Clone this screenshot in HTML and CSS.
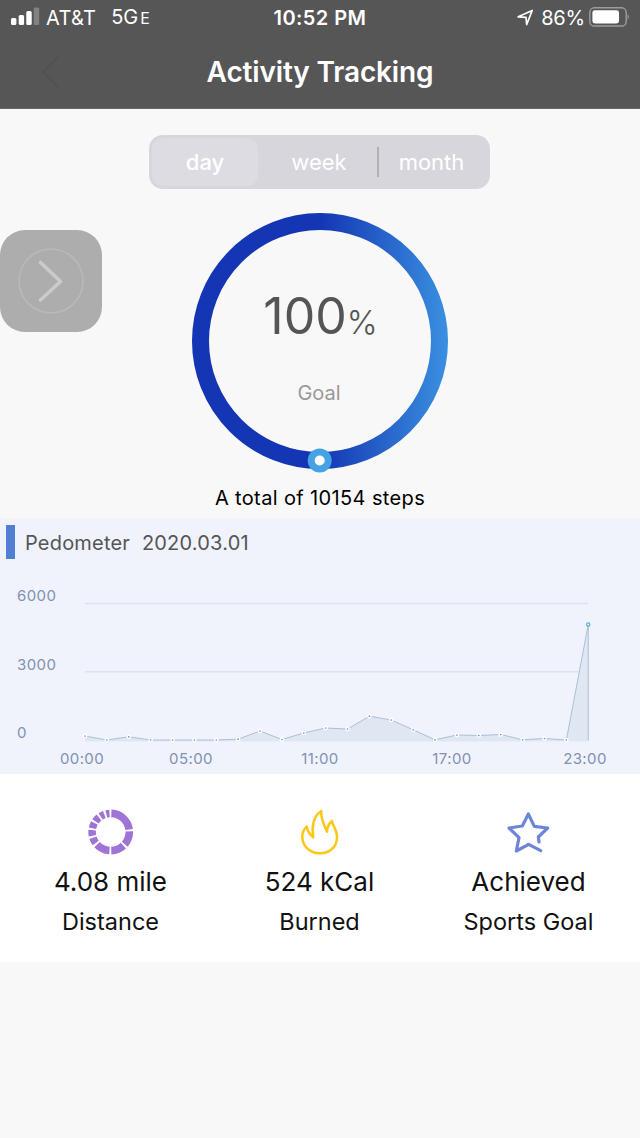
FILE: index.html
```html
<!DOCTYPE html>
<html lang="en">
<head>
    <meta charset="UTF-8">
    <meta name="viewport" content="width=device-width, initial-scale=1.0">
    <title>Activity Tracking</title>
    <link rel="stylesheet" href="styles.css">
</head>
<body>

    <header class="header">
        <div class="status-bar">
            <div class="status-left">
                <svg class="signal" width="29" height="19" viewBox="0 0 29 19">
                    <rect x="0" y="11" width="5.4" height="7" rx="1.5" fill="#fff"/>
                    <rect x="7.7" y="8" width="5.4" height="10" rx="1.5" fill="#fff"/>
                    <rect x="15.3" y="4" width="5.4" height="14" rx="1.5" fill="#fff"/>
                    <rect x="22.8" y="0.5" width="5.4" height="17.5" rx="1.5" fill="#828282"/>
                </svg>
                <span class="carrier">AT&amp;T</span>
                <span class="network">5G<small>E</small></span>
            </div>
            <div class="clock">10:52 PM</div>
            <div class="status-right">
                <svg width="17" height="17" viewBox="0 0 17 17">
                    <path d="M1.2 7.8 L15.2 1.5 L9.7 15.5 L9 8.3 Z" fill="none" stroke="#fff" stroke-width="1.7" stroke-linejoin="round"/>
                </svg>
                <span class="percent">86%</span>
                <svg class="battery" width="42" height="20" viewBox="0 0 42 20">
                    <rect x="0.8" y="0.8" width="36.4" height="18.2" rx="4.6" fill="none" stroke="#9c9c9c" stroke-width="1.4"/>
                    <rect x="3.4" y="3.3" width="26.6" height="13.2" rx="2.4" fill="#fff"/>
                    <path d="M38.6 7 Q41.2 9.9 38.6 12.8 Z" fill="#9c9c9c"/>
                </svg>
            </div>
        </div>
        <div class="title-bar">
            <svg class="back" width="26" height="40" viewBox="0 0 26 40">
                <path d="M21 5 L6 20 L21 35" fill="none" stroke="#525252" stroke-width="2"/>
            </svg>
            <h1>Activity Tracking</h1>
        </div>
    </header>

    <section class="summary">
        <div class="tabs">
            <button class="tab active">day</button>
            <button class="tab">week</button>
            <button class="tab divided">month</button>
        </div>

        <div class="ring">
            <svg width="256" height="262" viewBox="0 0 256 262">
                <defs>
                    <linearGradient id="ring-color" gradientUnits="userSpaceOnUse" x1="128" y1="0" x2="256" y2="0">
                        <stop offset="0" stop-color="#1436b4"/>
                        <stop offset="1" stop-color="#3a90e0"/>
                    </linearGradient>
                </defs>
                <circle cx="128" cy="128" r="119.5" fill="none" stroke="url(#ring-color)" stroke-width="17"/>
                <circle cx="127.7" cy="247.5" r="12" fill="#45a2e5"/>
                <circle cx="127.7" cy="247.5" r="5" fill="#fff"/>
            </svg>
            <div class="ring-text">
                <div class="ring-value">100<span>%</span></div>
                <div class="ring-label">Goal</div>
            </div>
        </div>

        <p class="total">A total of 10154 steps</p>

        <button class="float-btn">
            <svg width="66" height="66" viewBox="0 0 66 66">
                <circle cx="33" cy="33" r="32" fill="none" stroke="#b9b9b9" stroke-width="1.6"/>
                <path d="M22.5 14.5 L42.5 33.5 L22.5 52" fill="none" stroke="#cbcbcb" stroke-width="3.6" stroke-linecap="round" stroke-linejoin="round"/>
            </svg>
        </button>
    </section>

    <section class="chart">
        <h2>Pedometer <span>2020.03.01</span></h2>
        <svg id="steps-chart" width="640" height="210" viewBox="0 0 640 210">
            <line class="grid-line" x1="85" y1="39.5" x2="588" y2="39.5"/>
            <line class="grid-line" x1="85" y1="107.7" x2="588" y2="107.7"/>
            <text x="17" y="37.3">6000</text>
            <text x="17" y="105.6">3000</text>
            <text x="17" y="174">0</text>
            <text class="hour" x="82" y="200.3">00:00</text>
            <text class="hour" x="191" y="200.3">05:00</text>
            <text class="hour" x="320" y="200.3">11:00</text>
            <text class="hour" x="452" y="200.3">17:00</text>
            <text class="hour" x="585" y="200.3">23:00</text>
        </svg>
    </section>

    <section class="stats">
        <div class="stat">
            <svg width="46" height="46" viewBox="0 0 46 46">
                <circle cx="22.7" cy="23" r="18.6" fill="none" stroke="#a073d6" stroke-width="7.6" pathLength="360" transform="rotate(-88 22.7 23)"
                    stroke-dasharray="80 6 43 6 41 6 43 7 18 6 18 6 17 6 16 6 13 6 10 6"/>
            </svg>
            <div class="stat-value">4.08 mile</div>
            <div class="stat-label">Distance</div>
        </div>
        <div class="stat">
            <svg width="46" height="46" viewBox="171 42 138 138">
                <path d="M240 175 C207 175 186 151 187 123 C187 111 192 103 200 95 C203 108 209 119 220 127 C214 98 220 62 244 48 C241 72 252 88 261 110 C261 97 268 85 276 78 C277 92 291 104 291 124 C292 153 272 175 240 175 Z" fill="none" stroke="#fcc716" stroke-width="7.5" stroke-linejoin="round"/>
            </svg>
            <div class="stat-value">524 kCal</div>
            <div class="stat-label">Burned</div>
        </div>
        <div class="stat">
            <svg width="46" height="46" viewBox="167 42 138 138">
                <path d="M266 141 L264 126 L292 99 L252 94 L234 57 L216 93 L176 99 L206 128 L198 168 L235 148 L271 167" fill="none" stroke="#6c85d9" stroke-width="9.5" stroke-linejoin="round" stroke-linecap="round"/>
            </svg>
            <div class="stat-value">Achieved</div>
            <div class="stat-label">Sports Goal</div>
        </div>
    </section>

    <script src="script.js"></script>
</body>
</html>
```
FILE: styles.css
```css
* {
    box-sizing: border-box;
}

body {
    margin: 0;
    background: #f8f8f8;
    font-family: Inter, Roboto, sans-serif;
    color: #111;
}

h1, h2, p {
    margin: 0;
    font-weight: 400;
}

button {
    border: none;
    padding: 0;
    font-family: inherit;
}

svg {
    display: block;
}

/* Header */
.header {
    height: 109px;
    background: #565656;
    border-bottom: 1px solid #6a6565;
    color: #fff;
}

.status-bar {
    display: grid;
    grid-template-columns: 1fr auto 1fr;
    align-items: center;
    height: 34px;
    padding: 0 10px 0 11px;
    font-size: 20px;
    line-height: 34px;
}

.status-left, .status-right {
    display: flex;
    align-items: center;
}

.status-right {
    justify-content: flex-end;
}

.signal {
    margin-bottom: 3px;
}

.carrier {
    margin-left: 6px;
    letter-spacing: 0.3px;
}

.network {
    margin-left: 15px;
}

.network small {
    font-size: 16px;
    margin-left: 2px;
}

.clock {
    font-weight: 600;
    letter-spacing: 0.45px;
    margin-right: 1px;
}

.percent {
    margin: 0 4px 0 7px;
    letter-spacing: -0.2px;
}

.battery {
    margin-right: -1px;
    margin-bottom: 2px;
}

.title-bar {
    display: grid;
    grid-template-columns: 40px 1fr 40px;
    align-items: center;
    height: 75px;
    padding: 0 37px;
}

.title-bar h1 {
    font-size: 28px;
    font-weight: 600;
    letter-spacing: -0.15px;
    text-align: center;
    white-space: nowrap;
}

/* Summary */
.summary {
    position: relative;
    display: flex;
    flex-direction: column;
    align-items: center;
    height: 409px;
    padding-top: 26px;
}

.tabs {
    display: grid;
    grid-template-columns: 106px 1fr 112px;
    width: 341px;
    height: 54px;
    margin-right: 1px;
    padding: 3px;
    border-radius: 14px;
    background: #d7d6dc;
}

.tab {
    position: relative;
    padding-left: 5px;
    border-radius: 11px;
    background: none;
    color: #fff;
    font-size: 22px;
}

.tab.active {
    padding-left: 0;
    background: #dddce3;
    font-weight: 500;
}

.tab.divided {
    padding-left: 1px;
}

.tab.divided::before {
    content: "";
    position: absolute;
    left: 2px;
    top: 9px;
    width: 1.5px;
    height: 30px;
    background: #b2b1b6;
}

.ring {
    position: relative;
    margin-top: 24px;
}

.ring-text {
    position: absolute;
    top: 73px;
    left: 0;
    width: 100%;
    text-align: center;
}

.ring-value {
    color: #555;
    font-size: 50px;
    line-height: 60px;
}

.ring-value span {
    font-size: 33px;
    font-weight: 300;
    letter-spacing: -1px;
}

.ring-label {
    margin-top: 29px;
    padding-right: 2px;
    color: #999;
    font-size: 20px;
    line-height: 24px;
}

.total {
    margin-top: 11px;
    color: #000;
    font-size: 20px;
    letter-spacing: 0.37px;
    line-height: 24px;
}

.float-btn {
    position: absolute;
    top: 121px;
    left: 0;
    display: flex;
    align-items: center;
    justify-content: center;
    width: 102px;
    height: 102px;
    border-radius: 25px;
    background: #adadad;
}

/* Chart */
.chart {
    height: 256px;
    padding-top: 7px;
    background: #f0f3fb;
}

.chart h2 {
    height: 34px;
    margin-left: 6px;
    padding-left: 10px;
    border-left: 9px solid #5080d6;
    color: #555;
    font-size: 20px;
    letter-spacing: 0.2px;
    line-height: 36px;
}

.chart h2 span {
    margin-left: 6px;
}

.chart svg {
    margin-top: 5px;
}

.chart text {
    fill: #7f91b5;
    font-size: 15px;
    letter-spacing: 0.4px;
}

.chart .hour {
    text-anchor: middle;
}

.grid-line {
    stroke: #dde3ee;
    stroke-width: 1.5;
}

.area {
    fill: #dfe7f3;
}

.steps-line {
    fill: none;
    stroke: #acc0d6;
    stroke-width: 1;
}

.dot {
    fill: #7593b5;
    stroke: #fff;
    stroke-width: 1.5;
}

.dot.last {
    fill: #fff;
    stroke: #58a9d6;
    stroke-width: 1.2;
}

/* Stats */
.stats {
    display: grid;
    grid-template-columns: repeat(3, 209px);
    height: 188px;
    padding: 35px 0 0 6px;
    background: #fff;
    text-align: center;
}

.stat svg {
    margin: 0 auto;
}

.stat-value {
    margin-top: 11px;
    font-size: 26px;
    line-height: 32px;
}

.stat-label {
    margin-top: 10px;
    font-size: 23.5px;
    line-height: 28px;
}
```
FILE: script.js
```js
// height above the baseline for each hour, 00:00 to 23:00
const hours = [4.5, 0.5, 3.7, 0.5, 0.5, 0.5, 0.5, 1.3, 9.5, 1, 7.5, 12.5, 11.5, 24.3, 20.5, 10.7, 0.7, 5.5, 5, 6, 0.7, 2, 0.5, 116];
const left = 85;
const step = 21.88;
const base = 176.5;

const svg = document.getElementById("steps-chart");

function add(tag, attrs) {
    const el = document.createElementNS("http://www.w3.org/2000/svg", tag);
    for (const key in attrs) {
        el.setAttribute(key, attrs[key]);
    }
    svg.appendChild(el);
}

const points = hours.map((h, i) => [left + i * step, base - h]);
const line = points.map(p => p.join(",")).join(" ");
const right = points[points.length - 1][0];

add("polygon", { class: "area", points: `${left},${base + 1} ${line} ${right},${base + 1}` });
add("polyline", { class: "steps-line", points: `${line} ${right},${base}` });

points.forEach((p, i) => {
    const last = i === points.length - 1;
    add("circle", { class: last ? "dot last" : "dot", cx: p[0], cy: p[1], r: 1.6 });
});
```
